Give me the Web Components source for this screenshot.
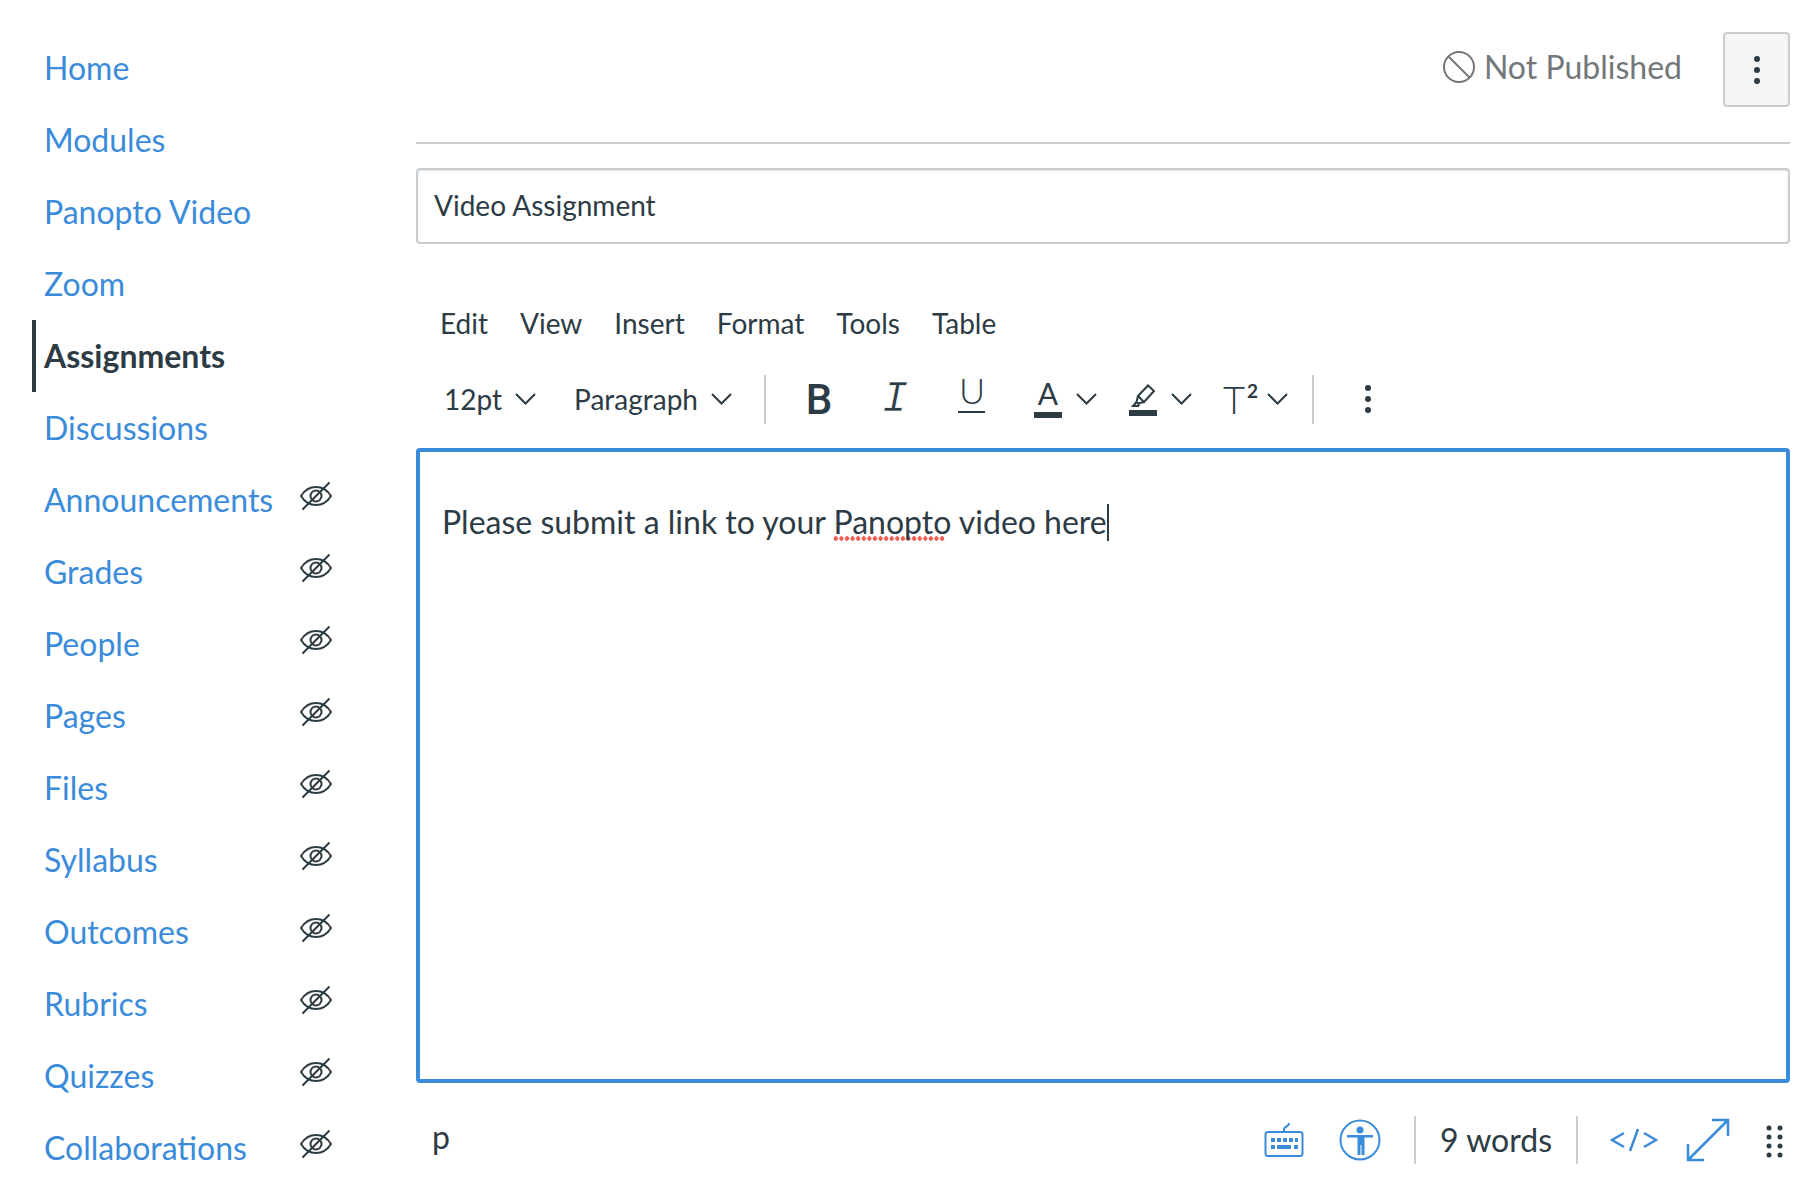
<!DOCTYPE html>
<html lang="en">
<head>
<meta charset="utf-8">
<title>Video Assignment</title>
<style>
  html, body { margin: 0; padding: 0; background: #fff; }
  body { font-family: Lato, "Liberation Sans", sans-serif; color: #2d3b45; }
</style>
</head>
<body>
<app-page>
  <course-nav slot="nav">
    <nav-item>Home</nav-item>
    <nav-item>Modules</nav-item>
    <nav-item>Panopto Video</nav-item>
    <nav-item>Zoom</nav-item>
    <nav-item active>Assignments</nav-item>
    <nav-item>Discussions</nav-item>
    <nav-item hidden-eye>Announcements</nav-item>
    <nav-item hidden-eye>Grades</nav-item>
    <nav-item hidden-eye>People</nav-item>
    <nav-item hidden-eye>Pages</nav-item>
    <nav-item hidden-eye>Files</nav-item>
    <nav-item hidden-eye>Syllabus</nav-item>
    <nav-item hidden-eye>Outcomes</nav-item>
    <nav-item hidden-eye>Rubrics</nav-item>
    <nav-item hidden-eye>Quizzes</nav-item>
    <nav-item hidden-eye>Collaborations</nav-item>
  </course-nav>
  <publish-header slot="main"></publish-header>
  <title-input slot="main">Video Assignment</title-input>
  <rce-menubar slot="main"></rce-menubar>
  <rce-toolbar slot="main"></rce-toolbar>
  <rce-content slot="main">Please submit a link to your <span class="typo">Panopto</span> video here</rce-content>
  <rce-status slot="main"></rce-status>
</app-page>

<script>
class AppPage extends HTMLElement {
  constructor() {
    super();
    this.attachShadow({ mode: 'open' });
    this.shadowRoot.innerHTML = `
      <style>
        :host { display: flex; width: 1806px; height: 1196px; overflow: hidden; }
        .nav { flex: 0 0 416px; }
        .main { flex: 0 0 1374px; display: flex; flex-direction: column; }
      </style>
      <div class="nav"><slot name="nav"></slot></div>
      <div class="main"><slot name="main"></slot></div>
    `;
  }
}

class CourseNav extends HTMLElement {
  constructor() {
    super();
    this.attachShadow({ mode: 'open' });
    this.shadowRoot.innerHTML = `
      <style>
        :host { display: flex; flex-direction: column; padding: 32px 0 0 32px; width: 301px; }
      </style>
      <slot></slot>
    `;
  }
}

class NavItem extends HTMLElement {
  constructor() {
    super();
    this.attachShadow({ mode: 'open' });
  }

  connectedCallback() {
    const eye = this.hasAttribute('hidden-eye') ? `
      <svg viewBox="0 0 32 32" width="32" height="32" fill="none" stroke="#2d3b45" stroke-width="2">
        <path d="M1 16c4-6.500 9-9 15-9s11 2.500 15 9c-4 6.500-9 9-15 9S5 22.500 1 16z"/>
        <circle cx="16" cy="16" r="5.500"/>
        <path d="M3 29 29 3" stroke-linecap="round"/>
      </svg>` : '';
    this.shadowRoot.innerHTML = `
      <style>
        :host {
          display: flex; align-items: center; justify-content: space-between;
          height: 72px; box-sizing: border-box; padding-left: 12px;
          font-size: 32px; color: #3b8bdb;
        }
        :host([active]) {
          color: #2d3b45; font-weight: 700; padding-left: 8px;
          border-left: 4px solid #2d3b45;
        }
        span { margin-bottom: 2px; }
        svg { margin: 0 1px 8px 0; }
      </style>
      <span><slot></slot></span>${eye}
    `;
  }
}

class PublishHeader extends HTMLElement {
  constructor() {
    super();
    this.attachShadow({ mode: 'open' });
    this.shadowRoot.innerHTML = `
      <style>
        :host {
          display: flex; align-items: center; justify-content: flex-end;
          box-sizing: border-box; height: 144px; padding: 32px 0 35px;
          border-bottom: 2px solid #c7cdd1;
        }
        .state { display: flex; align-items: center; gap: 9px; font-size: 32px; color: #73777a; margin: 0 41px 6px 0; }
        button {
          width: 67px; height: 75px; box-sizing: border-box; padding: 0;
          display: flex; align-items: center; justify-content: center;
          background: #f5f5f5; border: 2px solid #c7cdd1; border-radius: 4px;
        }
      </style>
      <span class="state">
        <svg viewBox="0 0 32 32" width="32" height="32" fill="none" stroke="#73777a" stroke-width="2">
          <circle cx="16" cy="16" r="15"/><path d="M5.500 5.500 26.500 26.500"/>
        </svg>
        Not Published
      </span>
      <button aria-label="Settings">
        <svg viewBox="0 0 8 30" width="8" height="30" fill="#2d3b45">
          <circle cx="4" cy="4" r="3"/><circle cx="4" cy="15" r="3"/><circle cx="4" cy="26" r="3"/>
        </svg>
      </button>
    `;
  }
}

class TitleInput extends HTMLElement {
  constructor() {
    super();
    this.attachShadow({ mode: 'open' });
    this.shadowRoot.innerHTML = `
      <style>
        :host {
          display: flex; align-items: center; box-sizing: border-box;
          height: 76px; margin-top: 24px; padding: 0 0 2px 16px;
          border: 2px solid #c7cdd1; border-radius: 4px;
          box-shadow: inset 0 1px 2px rgba(0,0,0,.12);
          font-size: 28px; color: #2d3b45;
        }
      </style>
      <slot></slot>
    `;
  }
}

class RceMenubar extends HTMLElement {
  constructor() {
    super();
    this.attachShadow({ mode: 'open' });
    this.shadowRoot.innerHTML = `
      <style>
        :host {
          display: flex; align-items: center; gap: 32px;
          height: 56px; margin-top: 51px; padding-left: 24px;
          font-size: 28px; color: #2d3b45;
        }
      </style>
      <span>Edit</span><span>View</span><span>Insert</span>
      <span>Format</span><span>Tools</span><span>Table</span>
    `;
  }
}

const CHEVRON = `<svg class="chev" viewBox="0 0 21 12" width="21" height="12" fill="none" stroke="#2d3b45" stroke-width="2"><path d="M1 1 10.500 10.500 20 1"/></svg>`;

class RceToolbar extends HTMLElement {
  constructor() {
    super();
    this.attachShadow({ mode: 'open' });
    this.shadowRoot.innerHTML = `
      <style>
        :host { display: flex; align-items: center; height: 97px; padding: 0 0 0 28px; color: #2d3b45; }
        .row { display: flex; align-items: center; height: 92px; }
        .sel { font-size: 28px; display: flex; align-items: center; gap: 13px; }
        .sel + .sel { margin-left: 38px; }
        .sep { width: 2px; height: 49px; background: #c7cdd1; }
        .ic { width: 32px; height: 50px; display: flex; align-items: center; justify-content: center; line-height: 1; }
        .b { font: 500 42px Roboto, sans-serif; margin-left: 37px; }
        .i { font: italic 400 44px "Liberation Mono", monospace; margin-left: 44px; -webkit-text-stroke: .7px #fff; }
        .u { font: 300 36px/1 Lato, sans-serif; margin-left: 45px; flex-direction: column; justify-content: flex-start; }
        .u span { margin-top: -2px; }
        .u i { display: block; flex: none; width: 27px; height: 2px; background: #2d3b45; margin-top: 3px; }
        .a { font: 400 30px Lato, sans-serif; margin-left: 44px; flex-direction: column; }
        .bar { display: block; width: 28px; height: 6px; background: #2d3b45; flex: none; }
        .a .bar { margin: 1px 0 6px; }
        .hl { margin-left: 30px; flex-direction: column; }
        .t { font: 300 38px Lato, sans-serif; margin-left: 31px; justify-content: flex-start; }
        .t sup { font: 700 19px Lato, sans-serif; margin: -18px 0 0 2px; }
        .chev { flex: none; }
        .mc { margin-left: 12px; }
        .dots { margin-left: 50px; }
      </style>
      <div class="row">
      <span class="sel"><span>12pt</span> ${CHEVRON}</span>
      <span class="sel"><span>Paragraph</span> ${CHEVRON}</span>
      <span class="sep" style="margin-left:32px"></span>
      <span class="ic b">B</span>
      <span class="ic i">I</span>
      <span class="ic u"><span>U</span><i></i></span>
      <span class="ic a">A<span class="bar"></span></span>
      ${CHEVRON.replace('class="chev"', 'class="chev mc"')}
      <span class="ic hl">
        <svg viewBox="0 0 28 26" width="28" height="26" fill="none" stroke="#2d3b45" stroke-width="2">
          <path d="M9 13 19 2.500l6 5.500-10 11-6-6zM9 13l-1.500 6 1.500 1.500 6-1.500M7.500 19 4 23h5l1.500-1.500"/>
        </svg>
        <span class="bar" style="margin-top:1px"></span>
      </span>
      ${CHEVRON.replace('class="chev"', 'class="chev" style="margin-left:12px"')}
      <span class="ic t">T<sup>2</sup></span>
      ${CHEVRON.replace('class="chev"', 'class="chev" style="margin-left:12px"')}
      <span class="sep" style="margin-left:24px"></span>
      <svg class="dots" viewBox="0 0 8 30" width="8" height="30" fill="#2d3b45">
        <circle cx="4" cy="4" r="3"/><circle cx="4" cy="15" r="3"/><circle cx="4" cy="26" r="3"/>
      </svg>
      </div>
    `;
  }
}

class RceContent extends HTMLElement {
  constructor() {
    super();
    this.attachShadow({ mode: 'open' });
    this.shadowRoot.innerHTML = `
      <style>
        :host {
          display: block; box-sizing: border-box; height: 636px;
          padding: 50px 0 0 22px;
          border: 4px solid #3b8bdb; border-radius: 4px;
          font-size: 32px; line-height: 40px; color: #2d3b45;
        }
        .caret { display: inline-block; width: 2px; height: 37px; background: #2d3b45; vertical-align: -7px; }
      </style>
      <slot></slot><span class="caret"></span>
    `;
  }
}

class RceStatus extends HTMLElement {
  constructor() {
    super();
    this.attachShadow({ mode: 'open' });
    this.shadowRoot.innerHTML = `
      <style>
        :host { display: flex; align-items: center; height: 113px; padding: 0 6px 0 16px; font-size: 32px; color: #2d3b45; }
        .sep { width: 2px; height: 48px; background: #c7cdd1; }
        svg { flex: none; }
      </style>
      <span style="margin:0 auto 6px 0">p</span>
      <svg viewBox="0 0 40 36" width="40" height="36" fill="none" stroke="#3b8bdb" stroke-width="2">
        <rect x="1.500" y="10" width="37" height="24" rx="2.500"/>
        <path d="M20 10V7c0-3 5-1.500 5-6"/>
        <g fill="#3b8bdb" stroke="none">
          <rect x="7" y="16" width="4" height="4"/><rect x="13" y="16" width="4" height="4"/><rect x="19" y="16" width="4" height="4"/><rect x="25" y="16" width="4" height="4"/><rect x="31" y="16" width="3" height="4"/>
          <rect x="7" y="23" width="4" height="4"/><rect x="13" y="23" width="14" height="4"/><rect x="30" y="23" width="4" height="4"/>
        </g>
      </svg>
      <svg style="margin-left:35px" viewBox="0 0 42 42" width="42" height="42" fill="none" stroke="#3b8bdb" stroke-width="2">
        <circle cx="21" cy="21" r="19.500"/>
        <g fill="#3b8bdb" stroke="none">
          <circle cx="21" cy="11" r="3.500"/>
          <path d="M8 16h26v2.500h-8.500V36h-3V26h-1v10h-3V18.500H8z"/>
        </g>
      </svg>
      <span class="sep" style="margin-left:33px"></span>
      <span style="margin:0 0 1px 24px">9 words</span>
      <span class="sep" style="margin-left:24px"></span>
      <svg style="margin-left:32px" viewBox="0 0 48 24" width="48" height="24" fill="none" stroke="#3b8bdb" stroke-width="2.500">
        <path d="M14 5 2 12l12 7M34 5l12 7-12 7M28 1l-8 22"/>
      </svg>
      <svg style="margin-left:28px" viewBox="0 0 44 44" width="44" height="44" fill="none" stroke="#3b8bdb" stroke-width="2.500">
        <path d="M26 2h16v16M42 2 2 42M2 26v16h16"/>
      </svg>
      <svg style="margin-left:34px" viewBox="0 0 20 36" width="20" height="36" fill="#2d3b45">
        <circle cx="5" cy="6" r="2.500"/><circle cx="16" cy="6" r="2.500"/>
        <circle cx="5" cy="15" r="2.500"/><circle cx="16" cy="15" r="2.500"/>
        <circle cx="5" cy="24" r="2.500"/><circle cx="16" cy="24" r="2.500"/>
        <circle cx="5" cy="33" r="2.500"/><circle cx="16" cy="33" r="2.500"/>
      </svg>
    `;
  }
}

customElements.define('app-page', AppPage);
customElements.define('course-nav', CourseNav);
customElements.define('nav-item', NavItem);
customElements.define('publish-header', PublishHeader);
customElements.define('title-input', TitleInput);
customElements.define('rce-menubar', RceMenubar);
customElements.define('rce-toolbar', RceToolbar);
customElements.define('rce-content', RceContent);
customElements.define('rce-status', RceStatus);

// the squiggle sits on light DOM text, so it gets one page-level rule
const typoStyle = document.createElement('style');
typoStyle.textContent = `.typo {
  background:
    linear-gradient(#fff, #fff) right bottom / 6px 5px no-repeat,
    radial-gradient(circle at center, #ee5f55 2px, transparent 2.500px) left bottom / 5.6px 5px repeat-x;
}`;
document.head.appendChild(typoStyle);
</script>
</body>
</html>
